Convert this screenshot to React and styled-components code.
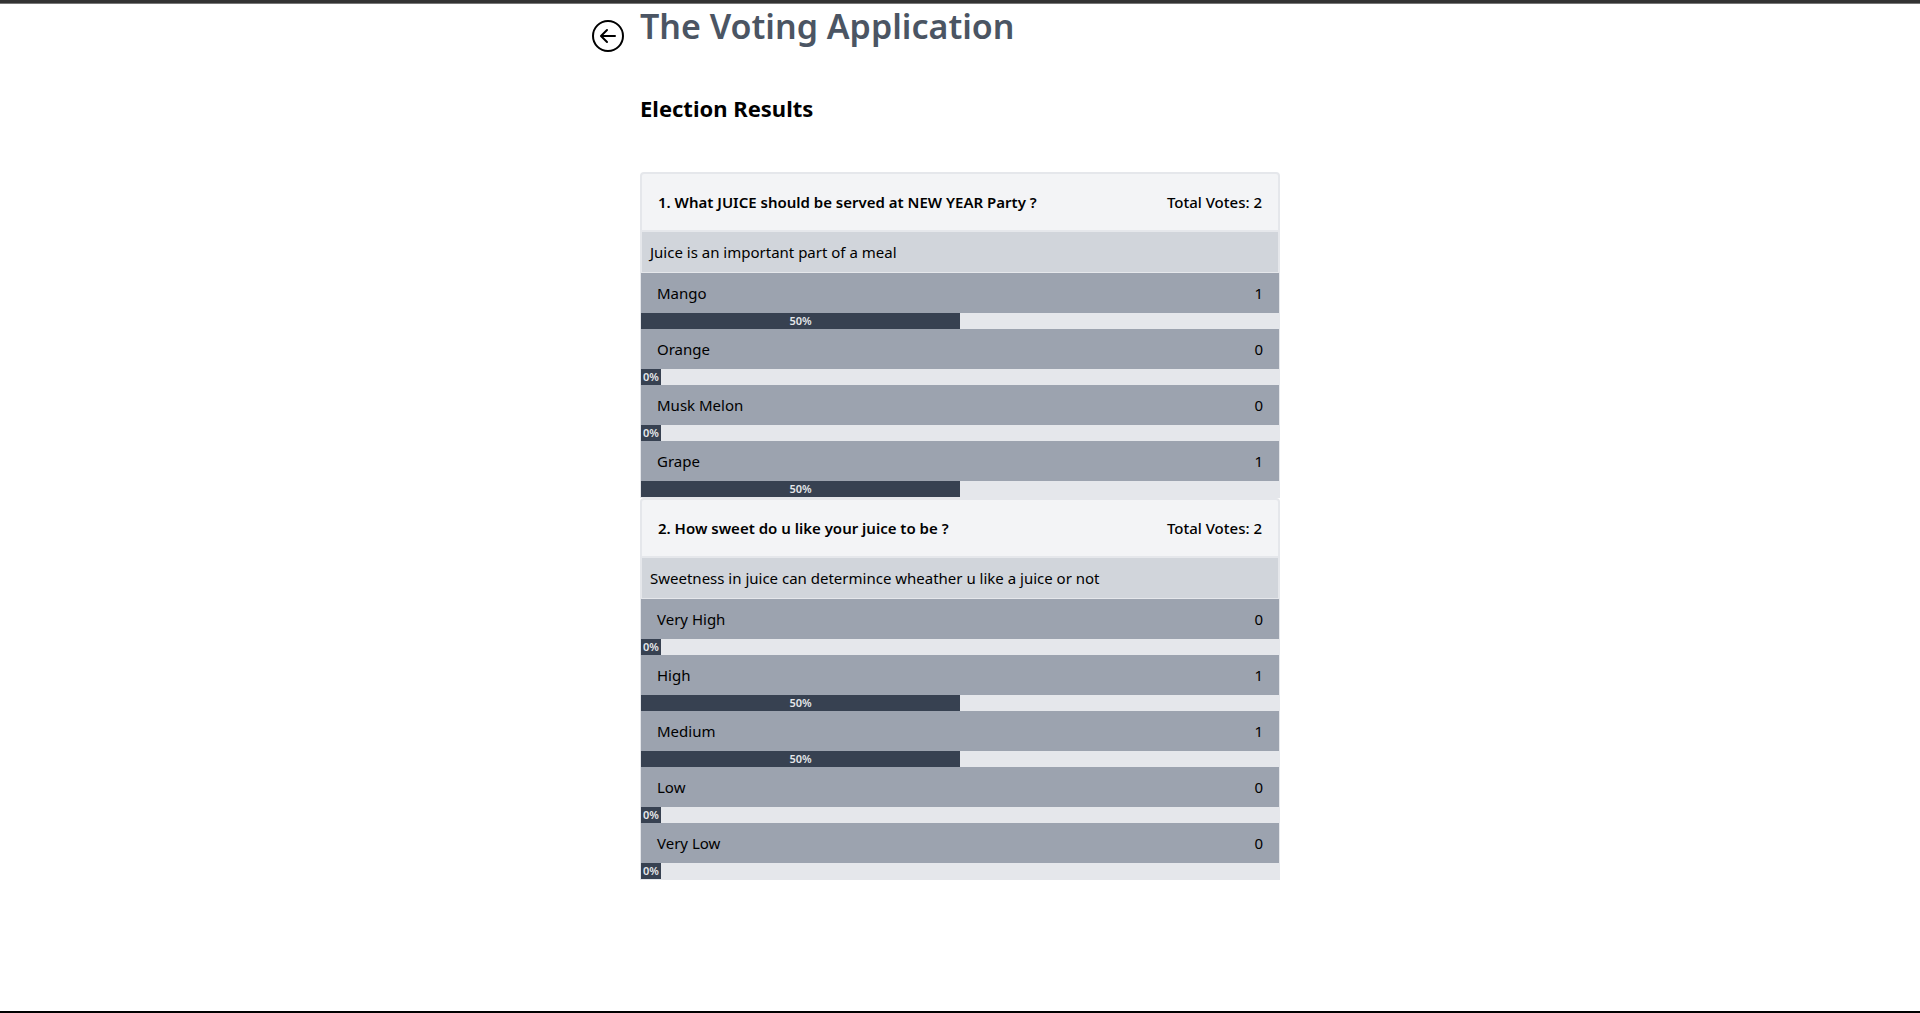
import React from "react";
import styled, { createGlobalStyle } from "styled-components";
import { BsArrowLeftCircle } from "react-icons/bs";

const GlobalStyle = createGlobalStyle`
  *, *::before, *::after {
    box-sizing: border-box;
  }
  body {
    margin: 0;
    background: #fff;
    color: #000;
    font-family: "Segoe UI", "Noto Sans", "Open Sans", sans-serif;
    font-size: 15px;
    line-height: 24px;
  }
  h1, h2, h3, p, ul {
    margin: 0;
    padding: 0;
  }
`;

const Page = styled.div`
  min-height: 100vh;
  display: flex;
  flex-direction: column;
  border-bottom: 2px solid #000;
`;

const TopBar = styled.header`
  height: 4px;
  background: #333;
  border-bottom: 1px solid #777;
`;

const Columns = styled.div`
  display: grid;
  grid-template-columns: repeat(3, minmax(0, 1fr));
`;

const Side = styled.nav`
  display: flex;
  justify-content: flex-end;
  align-items: flex-start;
  padding: 16px 16px 0 0;
`;

const BackLink = styled.a`
  display: block;
  color: #000;

  svg {
    display: block;
    width: 32px;
    height: 32px;
  }
`;

const Content = styled.main`
  padding-bottom: 32px;
`;

const Title = styled.h1`
  color: #4b5563;
  font-size: 34px;
  font-weight: 600;
  line-height: 44px;
  white-space: nowrap;
`;

const Subtitle = styled.h2`
  padding: 43px 0 47px;
  font-size: 22px;
  font-weight: 700;
  line-height: 34px;
`;

const QuestionHeader = styled.div`
  display: flex;
  justify-content: space-between;
  padding: 16px;
  border: 2px solid #e5e7eb;
  border-radius: 4px 4px 0 0;
  background: #f3f4f6;
`;

const QuestionTitle = styled.h3`
  font-size: 15px;
  font-weight: 600;
`;

const Total = styled.span`
  font-weight: 500;
`;

const Description = styled.p`
  padding: 8px;
  border: solid #e5e7eb;
  border-width: 0 2px;
  background: #d1d5db;
`;

const OptionList = styled.ul`
  list-style: none;
  border: 1px solid #e5e7eb;
`;

const OptionRow = styled.div`
  display: flex;
  justify-content: space-between;
  padding: 8px 16px;
  background: #9ca3af;
`;

const Track = styled.div`
  height: 16px;
  background: #e5e7eb;
`;

const Fill = styled.div`
  min-width: min-content;
  height: 16px;
  padding: 2px;
  background: #374151;
  color: #e5e7eb;
  font-size: 11px;
  font-weight: 600;
  line-height: 12px;
  text-align: center;
`;

const questions = [
  {
    title: "What JUICE should be served at NEW YEAR Party ?",
    description: "Juice is an important part of a meal",
    options: [["Mango", 1], ["Orange", 0], ["Musk Melon", 0], ["Grape", 1]],
  },
  {
    title: "How sweet do u like your juice to be ?",
    description: "Sweetness in juice can determince wheather u like a juice or not",
    options: [["Very High", 0], ["High", 1], ["Medium", 1], ["Low", 0], ["Very Low", 0]],
  },
];

function Option({ name, votes, total }) {
  const percent = Math.round((votes / total) * 100);
  return (
    <li>
      <OptionRow>
        <span>{name}</span>
        <span>{votes}</span>
      </OptionRow>
      <Track role="progressbar" aria-label={name} aria-valuenow={percent} aria-valuemin={0} aria-valuemax={100}>
        <Fill style={{ width: `${percent}%` }}>{percent}%</Fill>
      </Track>
    </li>
  );
}

function Question({ number, title, description, options }) {
  const total = options.reduce((sum, [, votes]) => sum + votes, 0);
  return (
    <section>
      <QuestionHeader>
        <QuestionTitle>{`${number}. ${title}`}</QuestionTitle>
        <Total>{`Total Votes: ${total}`}</Total>
      </QuestionHeader>
      <Description>{description}</Description>
      <OptionList>
        {options.map(([name, votes]) => (
          <Option key={name} name={name} votes={votes} total={total} />
        ))}
      </OptionList>
    </section>
  );
}

export default function App() {
  return (
    <>
      <GlobalStyle />
      <Page>
        <TopBar />
        <Columns>
          <Side>
            <BackLink href="#" aria-label="Back">
              <BsArrowLeftCircle />
            </BackLink>
          </Side>
          <Content>
            <Title>The Voting Application</Title>
            <Subtitle>Election Results</Subtitle>
            {questions.map((question, index) => (
              <Question key={question.title} number={index + 1} {...question} />
            ))}
          </Content>
        </Columns>
      </Page>
    </>
  );
}
